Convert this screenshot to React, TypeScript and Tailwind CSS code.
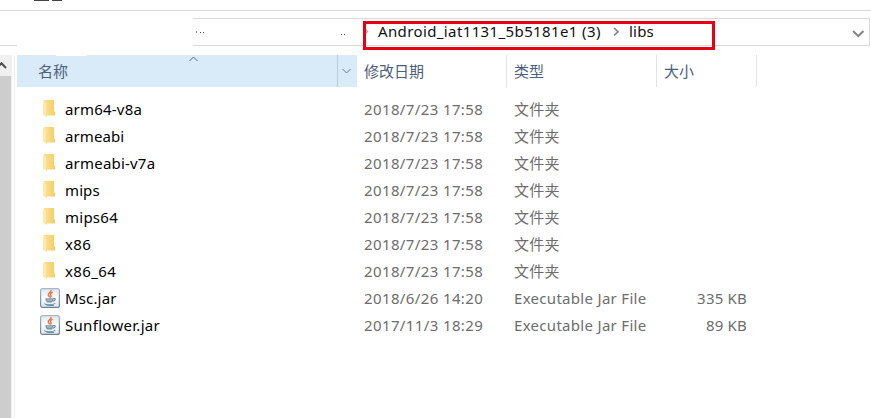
type Entry = { name: string; date: string; kind: string; size?: string; spacing: string };

const folder = (name: string, spacing: string): Entry => ({ name, date: '2018/7/23 17:58', kind: '文件夹', spacing });

const entries: Entry[] = [
  folder('arm64-v8a', 'tracking-[0.2px]'),
  folder('armeabi', 'tracking-[0.1px]'),
  folder('armeabi-v7a', 'tracking-[0.2px]'),
  folder('mips', 'tracking-[0.1px]'),
  folder('mips64', 'tracking-[0.25px]'),
  folder('x86', 'tracking-[0.4px]'),
  folder('x86_64', 'tracking-[0.4px]'),
  { name: 'Msc.jar', date: '2018/6/26 14:20', kind: 'Executable Jar File', size: '335 KB', spacing: 'tracking-[0.15px]' },
  { name: 'Sunflower.jar', date: '2017/11/3 18:29', kind: 'Executable Jar File', size: '89 KB', spacing: 'tracking-[0.3px]' },
];

function FolderIcon() {
  return (
    <svg width="12" height="18" viewBox="0 0 12 18" className="ml-[3px] block">
      <defs>
        <linearGradient id="folderBack" x1="0" x2="1">
          <stop offset="0" stopColor="#ffe292" />
          <stop offset="1" stopColor="#f1ce69" />
        </linearGradient>
      </defs>
      <path d="M1 0H11V11.5H12V15.5H3L1 14Z" fill="url(#folderBack)" />
      <path d="M0 1L4 3V17L0 15Z" fill="#ffe9a9" />
      <path d="M3.5 3V16.5" stroke="#f5d57c" strokeWidth="0.6" />
    </svg>
  );
}

function JarIcon() {
  return (
    <svg width="20" height="20" viewBox="0 0 20 20" className="block">
      <defs>
        <linearGradient id="jarPaper" x2="0" y2="1">
          <stop offset="0" stopColor="#e0e7ec" />
          <stop offset="0.5" stopColor="#fafcfd" />
          <stop offset="1" stopColor="#e0e5ea" />
        </linearGradient>
        <linearGradient id="jarEdge" x2="0" y2="1">
          <stop offset="0" stopColor="#a3b8c8" />
          <stop offset="1" stopColor="#6c8297" />
        </linearGradient>
      </defs>
      <rect x="0.6" y="0.6" width="18.8" height="18.8" rx="2" fill="url(#jarPaper)" stroke="url(#jarEdge)" strokeWidth="1.2" />
      <path d="M11 2C12 4 7.5 5 8.3 7.2L9.8 9.2M12.5 4.2C10 5.5 10 6.3 11 7.5C11.5 8.3 11 9 10.3 9.6" fill="none" stroke="#e8793f" strokeWidth="1.5" />
      <path d="M5.5 10.2H13.3V12L12 14.6H7L5.5 12Z" fill="#7895aa" />
      <path d="M7 12H12" stroke="#dce5eb" strokeWidth="0.7" />
      <path d="M13 10.7C16 9.7 16 12.7 12.7 13.3" fill="none" stroke="#68899f" strokeWidth="1.1" />
      <path d="M4.2 15.6C6 17.2 13 17.2 15.3 15.4M6.5 17.5H14" fill="none" stroke="#6f90a6" strokeWidth="1.1" />
    </svg>
  );
}

function Chevron({ d, box, color, width }: { d: string; box: [number, number]; color: string; width: number }) {
  return (
    <svg width={box[0]} height={box[1]} viewBox={`0 0 ${box[0]} ${box[1]}`} className="block shrink-0">
      <path d={d} fill="none" stroke={color} strokeWidth={width} />
    </svg>
  );
}

function AddressBar() {
  return (
    <div className="relative flex h-[45px]">
      <div className="mt-[34px] h-px w-[17px] bg-[#d9d9d9]" />
      <div className="ml-[176px] mt-[7px] flex h-[28px] w-[677px] border-y border-r border-[#d9d9d9]">
        <div className="mt-[12px] flex h-[2px] w-[11px] items-end pl-[3px]">
          <i className="h-[2px] w-px bg-[#999]" />
          <i className="ml-[4px] h-px w-[2px] bg-[#444]" />
          <i className="ml-[2px] h-px w-px shrink-0 bg-[#555]" />
        </div>
        <div className="ml-[137px] mt-[15px] flex gap-[2px]">
          <i className="h-px w-px bg-[#555]" />
          <i className="h-px w-px bg-[#555]" />
        </div>
        <div className="ml-[18px] mt-[8px]">
          <Chevron d="M1 1L4.5 4.5L1 8" box={[6, 9]} color="#aaa" width={1.5} />
        </div>
        <span className="ml-[9px] h-[24px] w-[232px] whitespace-nowrap leading-[24px] tracking-[0.38px] text-[#111]">Android_iat1131_5b5181e1 (3)</span>
        <div className="ml-[3px] mt-[8px]">
          <Chevron d="M1 1L5 4.7L1 8.5" box={[7, 10]} color="#858585" width={1.7} />
        </div>
        <span className="ml-[9px] leading-[24px] tracking-[0.2px] text-[#111]">libs</span>
        <div className="ml-auto mr-[4px] mt-[11px]">
          <Chevron d="M1 1L6.3 6L11.5 1" box={[13, 8]} color="#858585" width={2} />
        </div>
      </div>
      <div className="absolute left-[363px] top-[10px] h-[29px] w-[352px] border-[3px] border-[#e60012]" />
    </div>
  );
}

function HeaderRow() {
  return (
    <div className="flex h-8 leading-[32px] text-[#4c607a]">
      <div className="relative flex w-[340px] bg-[#d9eaf8]">
        <i className="absolute left-[39px] top-0 h-px w-[31px] bg-white" />
        <span className="ml-[21px]">名称</span>
        <div className="absolute left-[172px] top-[1px]">
          <Chevron d="M0.5 5L4.5 1L8.5 5" box={[9, 6]} color="#606d78" width={1} />
        </div>
        <div className="ml-auto flex w-[20px] items-center border-l border-[#bccbd8] pl-[4px]">
          <Chevron d="M0.5 1L4.5 5L8.5 1" box={[9, 6]} color="#6d7c88" width={1} />
        </div>
      </div>
      <div className="w-[150px] border-r border-[#e2e2e2] pl-[7px]">修改日期</div>
      <div className="w-[150px] border-r border-[#e2e2e2] pl-[7px]">类型</div>
      <div className="w-[100px] border-r border-[#e2e2e2] pl-[7px]">大小</div>
    </div>
  );
}

export default function App() {
  return (
    <div className="h-[418px] w-[871px] overflow-hidden bg-white font-['Noto_Sans','Noto_Sans_CJK_SC',sans-serif] text-[15px]">
      <div className="flex h-[11px] items-start border-b border-[#d9d9d9] pl-[34px]">
        <i className="h-px w-[15px] bg-[#444]" />
        <i className="ml-[3px] h-px w-[10px] bg-[#444]" />
      </div>
      <AddressBar />
      <div className="-mt-px flex h-[363px]">
        <div className="flex w-[12px] flex-col bg-[#f0f0f0]">
          <div className="h-[21px] pt-[7px]">
            <Chevron d="M-2 5L1.5 1.2L6 6" box={[7, 7]} color="#505050" width={2} />
          </div>
          <div className="w-[11px] flex-1 bg-[#cdcdcd]" />
        </div>
        <div className="ml-[2px] w-px bg-[#f0f0f0]" />
        <div className="ml-[2px] flex flex-col">
          <HeaderRow />
          <ul className="mt-[9px]">
            {entries.map((e) => (
              <li key={e.name} className="flex h-[27px] leading-[27px] text-[#6d6d6d]">
                <div className="ml-[23px] w-[25px] pt-[4px]">{e.size ? <div className="-mt-[1px]"><JarIcon /></div> : <FolderIcon />}</div>
                <span className={`w-[299px] text-black ${e.spacing}`}>{e.name}</span>
                <span className="w-[150px] tracking-[0.38px]">{e.date}</span>
                <span className="w-[142px] tracking-[0.3px]">{e.kind}</span>
                <span className="w-[91px] text-right tracking-[0.2px]">{e.size}</span>
              </li>
            ))}
          </ul>
        </div>
      </div>
    </div>
  );
}
